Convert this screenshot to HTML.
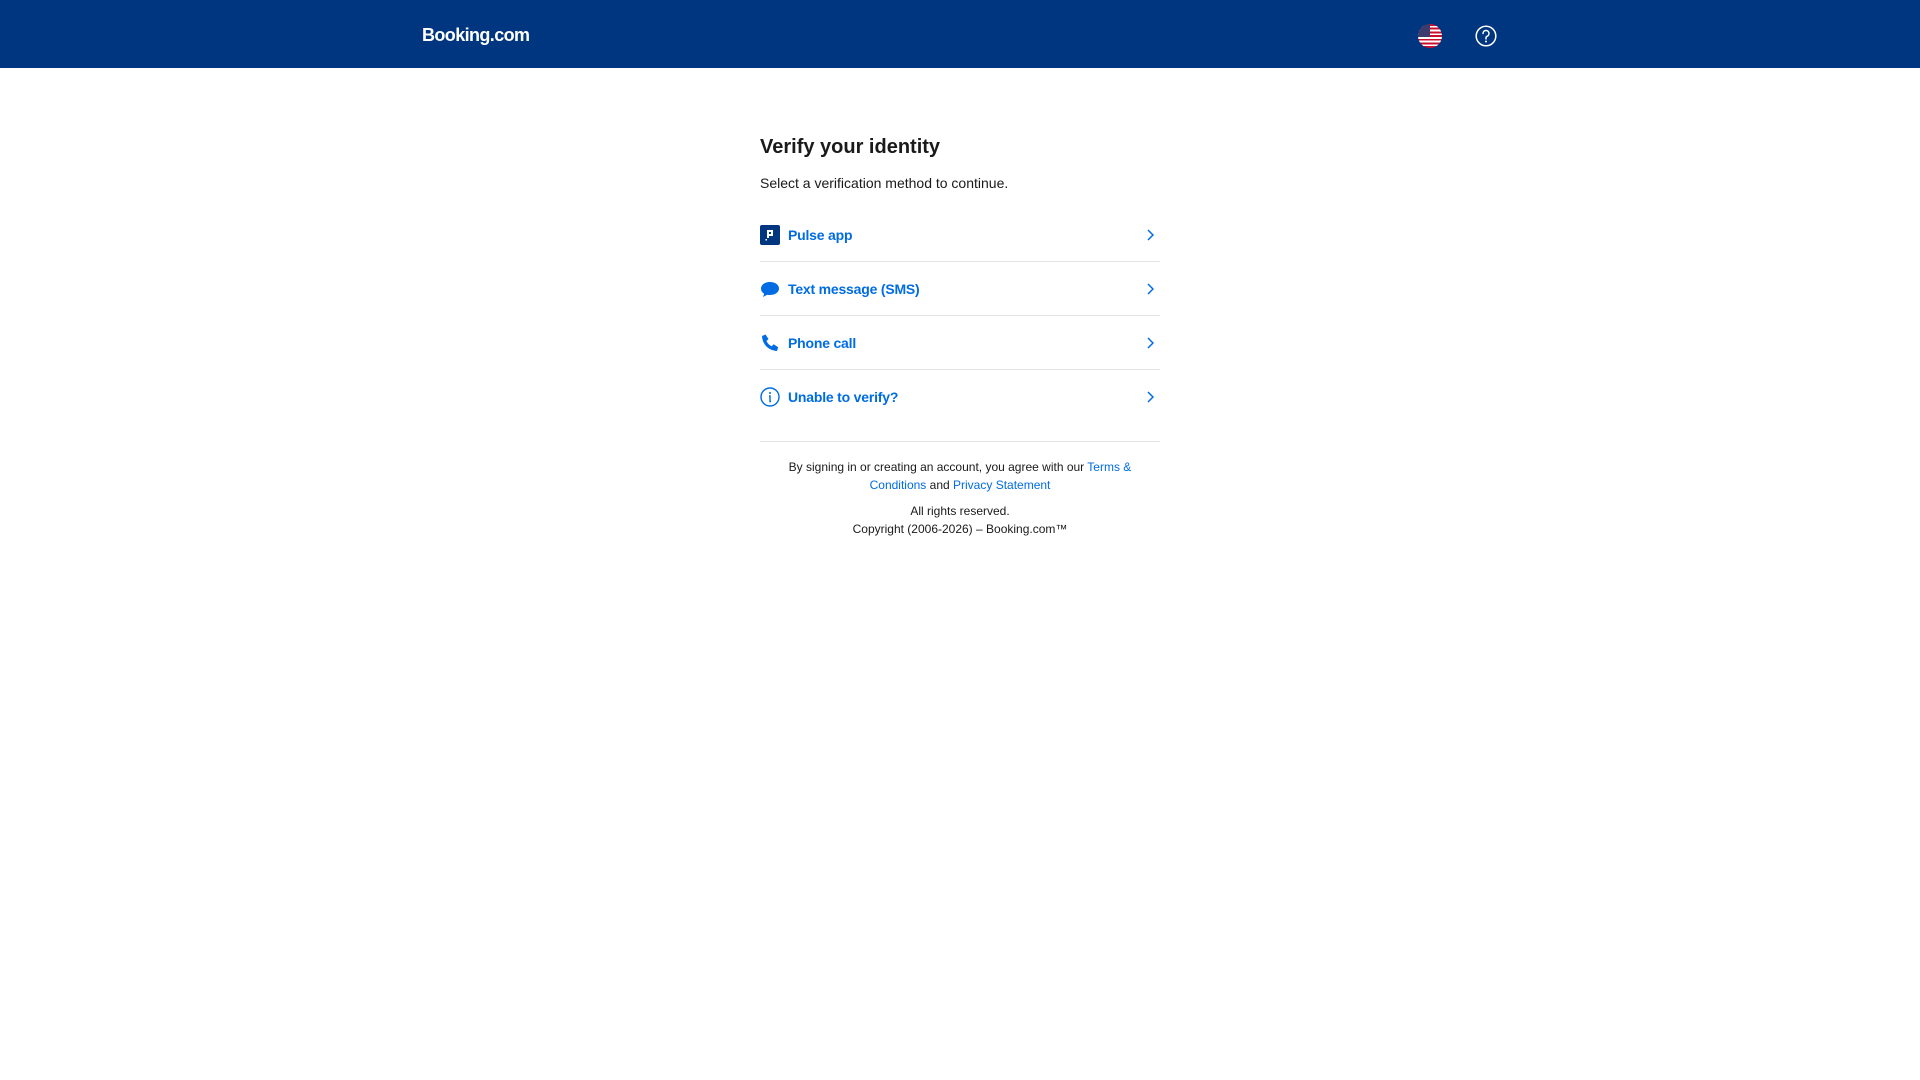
<!DOCTYPE html>
<html><head><meta charset="utf-8"><style>
*{margin:0;padding:0;box-sizing:border-box}
body{width:1920px;height:1080px;background:#fff;font-family:"Liberation Sans",Arial,sans-serif;color:#1a1a1a;position:relative;overflow:hidden}
.hdr{position:absolute;left:0;top:0;width:1920px;height:68px;background:#003580}
.logo{position:absolute;left:422px;top:25px;color:#fff;font-weight:bold;font-size:18px;letter-spacing:-0.6px}
.flag{position:absolute;left:1418px;top:24px;width:24px;height:24px;border-radius:50%;overflow:hidden;background:repeating-linear-gradient(#c8102e 0 1.85px,#fff 1.85px 3.7px)}
.flag:after{content:"";position:absolute;left:0;top:0;width:12px;height:13px;background:#3c3b6e}
.help{position:absolute;left:1475px;top:25px}
.main{position:absolute;left:760px;top:0;width:400px}
h1{position:absolute;top:136px;font-size:20px;font-weight:bold;white-space:nowrap}
.sub{position:absolute;top:175px;font-size:14px;white-space:nowrap}
.row{position:absolute;left:0;width:400px;height:54px;border-bottom:1px solid #e4e4e4;color:#006ce4;font-weight:bold;font-size:14px;letter-spacing:-0.2px}
.row .ic{position:absolute;left:0;top:17px;width:20px;height:20px}
.row .t{position:absolute;left:28px;top:19px}
.row .ch{position:absolute;right:6px;top:21px}
.foot{position:absolute;top:441px;width:400px;border-top:1px solid #e4e4e4;text-align:center;font-size:12px;line-height:18px;padding-top:16px;white-space:nowrap}
.foot a{color:#006ce4;text-decoration:none}
</style></head><body>
<div class="hdr">
<div class="logo">Booking.com</div>
<div class="flag"></div>
<svg class="help" width="22" height="22" viewBox="0 0 22 22"><circle cx="11" cy="11" r="9.8" fill="none" stroke="#fff" stroke-width="1.5"/><path d="M8 8.5a3 3 0 1 1 4 2.8c-.7.3-1 .8-1 1.6v1" fill="none" stroke="#fff" stroke-width="1.5" stroke-linecap="round"/><circle cx="11" cy="16.5" r="1" fill="#fff"/></svg>
</div>
<div class="main">
<h1>Verify your identity</h1>
<div class="sub">Select a verification method to continue.</div>
<div class="row" style="top:208px">
<svg class="ic" viewBox="0 0 20 20"><rect width="20" height="20" rx="2" fill="#003580"/><path d="M7 5h6v6H9v2H7z" fill="#fff"/><rect x="9" y="7" width="2" height="2" fill="#003580"/><rect x="5.5" y="14" width="1.5" height="1.5" fill="#fff"/></svg>
<span class="t">Pulse app</span>
<svg class="ch" width="8" height="12" viewBox="0 0 8 12"><path d="M2 1l5 5-5 5" fill="none" stroke="#006ce4" stroke-width="1.5"/></svg>
</div>
<div class="row" style="top:262px">
<svg class="ic" viewBox="0 0 20 20"><path d="M10 3c5 0 9 2.7 9 6.5S15 16 10 16c-1 0-2-.1-2.8-.3L3 18l1.2-3.2C2.2 13.6 1 11.7 1 9.5 1 5.7 5 3 10 3z" fill="#006ce4"/></svg>
<span class="t">Text message (SMS)</span>
<svg class="ch" width="8" height="12" viewBox="0 0 8 12"><path d="M2 1l5 5-5 5" fill="none" stroke="#006ce4" stroke-width="1.5"/></svg>
</div>
<div class="row" style="top:316px">
<svg class="ic" viewBox="0 0 20 20"><path d="M2 3l3.5-1.5 3 4.5-2 2c1 2.3 2.8 4.2 5.2 5.3l2-2 4.5 3L17 18C8.5 17.5 2.5 11.5 2 3z" fill="#006ce4"/></svg>
<span class="t">Phone call</span>
<svg class="ch" width="8" height="12" viewBox="0 0 8 12"><path d="M2 1l5 5-5 5" fill="none" stroke="#006ce4" stroke-width="1.5"/></svg>
</div>
<div class="row" style="top:370px;border-bottom:none">
<svg class="ic" viewBox="0 0 20 20"><circle cx="10" cy="10" r="9" fill="none" stroke="#006ce4" stroke-width="1.4"/><circle cx="10" cy="6" r="1" fill="#006ce4"/><path d="M9 9h1v5.5h1" fill="none" stroke="#006ce4" stroke-width="1.4"/></svg>
<span class="t">Unable to verify?</span>
<svg class="ch" width="8" height="12" viewBox="0 0 8 12"><path d="M2 1l5 5-5 5" fill="none" stroke="#006ce4" stroke-width="1.5"/></svg>
</div>
<div class="foot">By signing in or creating an account, you agree with our <a>Terms &amp;</a><br><a>Conditions</a> and <a>Privacy Statement</a><div style="margin-top:8px">All rights reserved.<br>Copyright (2006-2026) – Booking.com™</div></div>
</div>
</body></html>
